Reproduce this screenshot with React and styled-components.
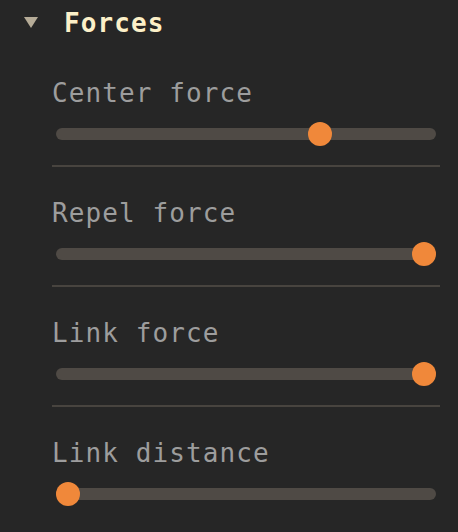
import React from "react";
import styled, { createGlobalStyle } from "styled-components";

const Global = createGlobalStyle`
  html, body { margin: 0; padding: 0; background: #262626; }
  body { font-family: "DejaVu Sans Mono", "Liberation Mono", monospace; }
`;

const Panel = styled.div`
  width: 458px;
  height: 532px;
  background: #262626;
  overflow: hidden;
`;

const Header = styled.div`
  display: flex;
  align-items: center;
  height: 46px;
  padding-left: 24px;
  gap: 26px;
`;

const Caret = styled.span`
  width: 0;
  height: 0;
  border-left: 7px solid transparent;
  border-right: 7px solid transparent;
  border-top: 11px solid #b5ab97;
  margin-top: -1px;
`;

const Title = styled.h2`
  margin: 0;
  font-size: 26px;
  letter-spacing: 1.1px;
  font-weight: 700;
  color: #fcf0c8;
  line-height: 46px;
`;

const List = styled.div`
  display: flex;
  flex-direction: column;
  padding: 31px 18px 0 52px;
`;

const Setting = styled.div`
  display: flex;
  flex-direction: column;
  border-bottom: ${(p) => (p.$last ? "none" : "2px solid #48443f")};
  padding-bottom: 25px;
  margin-bottom: 30px;
`;

const Label = styled.div`
  font-size: 26px;
  letter-spacing: 1.1px;
  line-height: 32px;
  color: #9d9d9d;
`;

const Track = styled.div`
  position: relative;
  margin: 19px 4px 0;
  height: 12px;
  border-radius: 6px;
  background: #4f4a45;
`;

const Thumb = styled.div`
  position: absolute;
  top: 50%;
  width: 24px;
  height: 24px;
  margin-left: -12px;
  margin-top: -12px;
  border-radius: 50%;
  background: #f0883a;
`;

const settings = [
  { label: "Center force", value: 0.708 },
  { label: "Repel force", value: 1 },
  { label: "Link force", value: 1 },
  { label: "Link distance", value: 0 },
];

export default function App() {
  return (
    <Panel>
      <Global />
      <Header>
        <Caret />
        <Title>Forces</Title>
      </Header>
      <List>
        {settings.map((s, i) => (
          <Setting key={s.label} $last={i === settings.length - 1}>
            <Label>{s.label}</Label>
            <Track>
              <Thumb style={{ left: `calc(12px + (100% - 24px) * ${s.value})` }} />
            </Track>
          </Setting>
        ))}
      </List>
    </Panel>
  );
}
